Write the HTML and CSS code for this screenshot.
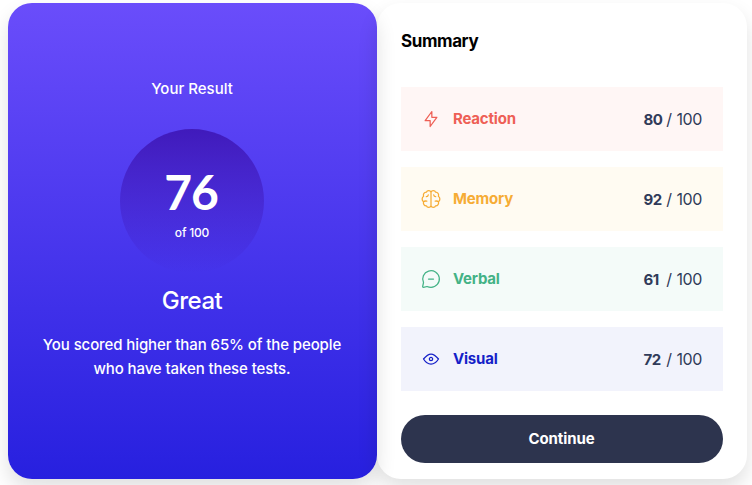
FILE: index.html
```html
<!DOCTYPE html>
<html lang="en">
<head>
<meta charset="utf-8">
<title>Results summary</title>
<link rel="stylesheet" href="styles.css">
</head>
<body>
<main class="results">
  <section class="card score">
    <h2 class="score-title">Your Result</h2>
    <div class="circle">
      <span class="circle-value">76</span>
      <span class="circle-total">of 100</span>
    </div>
    <p class="grade">Great</p>
    <p class="message">You scored higher than 65% of the people<br>who have taken these tests.</p>
  </section>
  <section class="card summary">
    <h1 class="summary-title">Summary</h1>
    <ul class="stats">
      <li class="stat reaction">
        <svg class="icon" viewBox="0 0 20 20"><path d="M10.833 8.333V2.500l-6.666 9.167h5V17.500l6.666-9.167h-5Z"/></svg>
        <span class="name">Reaction</span>
        <span class="value"><b>80</b> / 100</span>
      </li>
      <li class="stat memory">
        <svg class="icon" viewBox="0 0 20 20"><path d="M10 3.300A2.400 2.400 0 0 0 5.400 3.200A2.900 2.900 0 0 0 2.600 7.200A3.400 3.400 0 0 0 2.600 12.800A2.900 2.900 0 0 0 5.400 16.800A2.400 2.400 0 0 0 10 16.700ZM10 3.300A2.400 2.400 0 0 1 14.600 3.200A2.900 2.900 0 0 1 17.400 7.200A3.400 3.400 0 0 1 17.400 12.800A2.900 2.900 0 0 1 14.600 16.800A2.400 2.400 0 0 1 10 16.700M7.300 5.800Q7 7.600 5.300 7.700M12.700 5.800Q13 7.600 14.700 7.700M2.600 12.800Q3.800 11.600 5.800 12.200M17.400 12.800Q16.200 11.600 14.200 12.200"/></svg>
        <span class="name">Memory</span>
        <span class="value"><b>92</b> / 100</span>
      </li>
      <li class="stat verbal">
        <svg class="icon" viewBox="0 0 20 20"><path d="M7.500 10h5M10 18.333A8.333 8.333 0 1 0 2.500 13.600L1.667 17.500q-.1.833.833.833L6 17.500Q7.900 18.333 10 18.333Z"/></svg>
        <span class="name">Verbal</span>
        <span class="value"><b>61</b> / 100</span>
      </li>
      <li class="stat visual">
        <svg class="icon" viewBox="0 0 20 20"><path d="M10 11.667a1.667 1.667 0 1 0 0-3.334 1.667 1.667 0 0 0 0 3.334Z"/><path d="M17.500 10c-1.574 2.492-4.402 5-7.500 5s-5.926-2.508-7.500-5C4.416 7.632 6.660 5 10 5s5.584 2.632 7.500 5Z"/></svg>
        <span class="name">Visual</span>
        <span class="value"><b>72</b> / 100</span>
      </li>
    </ul>
    <button class="continue" type="button">Continue</button>
  </section>
</main>
</body>
</html>
```
FILE: styles.css
```css
* { box-sizing: border-box; }
body {
  margin: 0;
  height: 485px;
  overflow: hidden;
  background: #fff;
  font: 500 16px/24px Inter, "Liberation Sans", sans-serif;
}
h1, h2, p, ul { margin: 0; padding: 0; }
.results {
  display: grid;
  grid-template-columns: 369px 370px;
  height: 476px;
  margin: 3px 0 0 8px;
}
.card {
  border-radius: 24px;
  box-shadow: 0 10px 20px rgba(0, 0, 0, .12);
}
.score {
  display: flex;
  flex-direction: column;
  align-items: center;
  padding: 74px 1px 0 0;
  color: #fff;
  text-align: center;
  background: linear-gradient(#6a4dfb, #2720df);
}
.score-title { font-size: 15px; line-height: 24px; font-weight: 500; letter-spacing: 0; }
.circle {
  display: flex;
  flex-direction: column;
  align-items: center;
  width: 144px;
  height: 144px;
  margin-top: 28px;
  padding-top: 39px;
  border-radius: 50%;
  background: linear-gradient(#401abb, rgba(64, 26, 187, 0));
}
.circle-value { margin-right: 2px; font: 700 48px/48px Lato, sans-serif; letter-spacing: -1px; }
.circle-total { margin-top: 9px; font-size: 12px; line-height: 16px; letter-spacing: -.2px; }
.grade { margin-top: 12px; font-size: 24px; line-height: 32px; letter-spacing: -.5px; }
.message { margin-top: 16px; font-size: 15px; letter-spacing: -.1px; white-space: nowrap; }
.summary { padding: 24px 24px 16px; }
.summary-title { font-size: 17px; line-height: 28px; font-weight: 700; letter-spacing: -.4px; }
.stats { display: grid; gap: 16px; margin-top: 32px; list-style: none; }
.stat { display: flex; align-items: center; width: 322px; height: 64px; padding: 0 21px 0 20px; }
.icon { width: 20px; height: 20px; margin-right: 12px; fill: none; stroke: currentColor; stroke-width: 1.25; stroke-linecap: round; stroke-linejoin: round; }
.name { font-size: 15px; font-weight: 700; letter-spacing: -.2px; }
.value { margin-left: auto; color: #303b59; font-size: 16px; font-weight: 400; letter-spacing: -.4px; word-spacing: .7px; }
.value b { display: inline-block; width: 18px; font-size: 15px; font-weight: 700; letter-spacing: -.5px; }
.reaction { color: #ee5f55; background: #fff6f5; }
.memory { color: #f6ac35; background: #fffbf2; }
.verbal { color: #43b286; background: #f4fbf9; }
.visual { color: #151fc8; background: #f2f3fc; }
.continue {
  display: block;
  width: 322px;
  height: 48px;
  margin-top: 24px;
  padding: 0 1px 0 0;
  border: 0;
  border-radius: 24px;
  color: #fff;
  background: #2d344e;
  font: 700 15px/24px Inter, "Liberation Sans", sans-serif;
  letter-spacing: -.1px;
}
```
